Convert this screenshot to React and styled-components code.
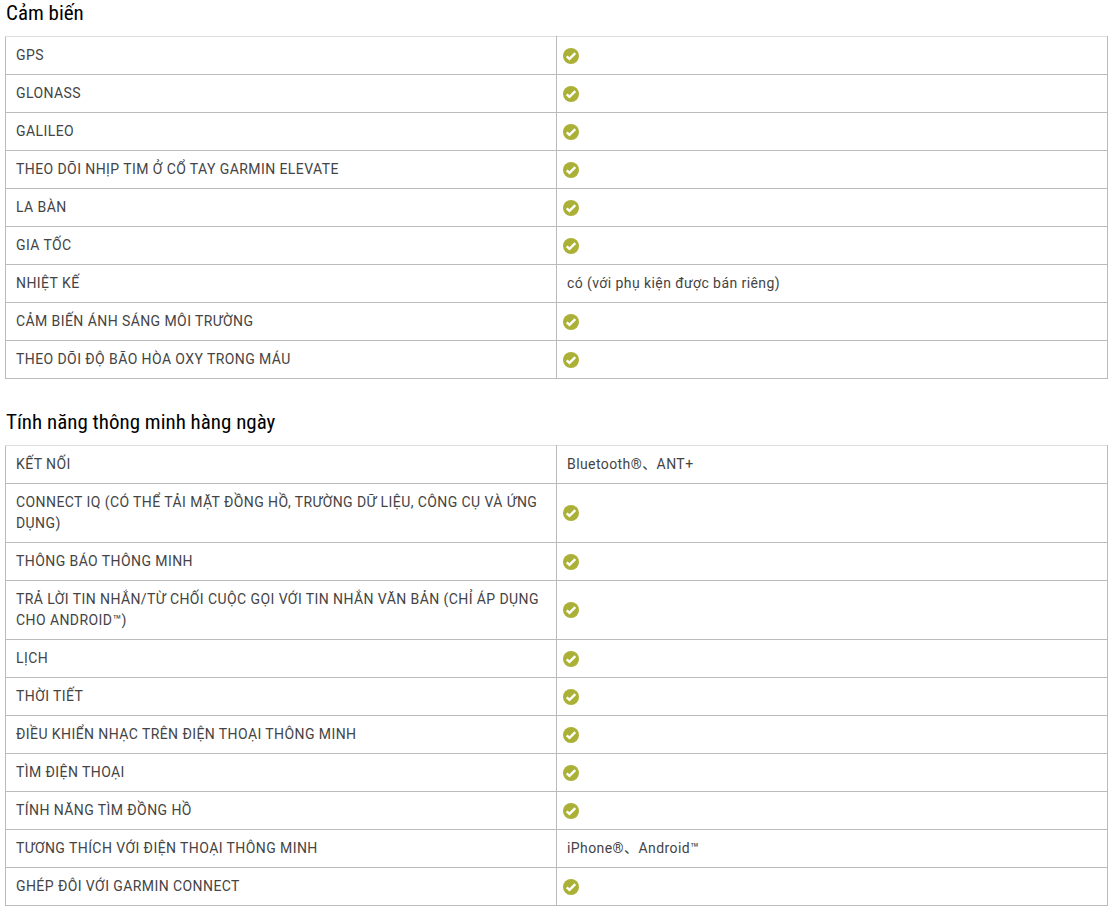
import React from "react";
import styled, { createGlobalStyle } from "styled-components";

const GlobalStyle = createGlobalStyle`
  body {
    margin: 0;
    background: #fff;
    color: #444;
    font-family: Roboto, "Noto Sans CJK SC", sans-serif;
    font-size: 14px;
    line-height: 21px;
  }
`;

const Page = styled.main`
  display: flex;
  flex-direction: column;
  gap: 30px;
  padding: 0 4px 2px 5px;
`;

const Title = styled.h2`
  margin: 0 0 9px;
  padding: 0 1px;
  color: #000;
  font-family: "Roboto Condensed", "Liberation Sans Narrow", Roboto, sans-serif;
  font-size: 21px;
  font-weight: 400;
  line-height: 27px;
`;

const Table = styled.table`
  width: 100%;
  table-layout: fixed;
  border-collapse: collapse;
  letter-spacing: 0.03em;

  th,
  td {
    box-sizing: border-box;
    border: 1px solid #bbb;
  }

  tr:first-child > * {
    border-top-color: #ddd;
  }
`;

const Label = styled.th`
  width: 50%;
  padding: 8px 10px;
  font-weight: 400;
  text-align: left;
  text-transform: uppercase;
`;

const Value = styled.td`
  width: 50%;
  padding: ${(props) => (props.$icon ? "8px 6px" : "8px 10px")};
`;

const CheckIcon = styled.svg`
  display: block;
  width: 16px;
  height: 16px;
`;

const sections = [
  {
    title: "Cảm biến",
    rows: [
      ["GPS", true],
      ["GLONASS", true],
      ["Galileo", true],
      ["Theo dõi nhịp tim ở cổ tay Garmin Elevate", true],
      ["La bàn", true],
      ["Gia tốc", true],
      ["Nhiệt kế", "có (với phụ kiện được bán riêng)"],
      ["Cảm biến ánh sáng môi trường", true],
      ["Theo dõi độ bão hòa oxy trong máu", true],
    ],
  },
  {
    title: "Tính năng thông minh hàng ngày",
    rows: [
      ["Kết nối", "Bluetooth®、ANT+"],
      ["Connect IQ (có thể tải mặt đồng hồ, trường dữ liệu, công cụ và ứng dụng)", true],
      ["Thông báo thông minh", true],
      ["Trả lời tin nhắn/từ chối cuộc gọi với tin nhắn văn bản (chỉ áp dụng cho Android™)", true],
      ["Lịch", true],
      ["Thời tiết", true],
      ["Điều khiển nhạc trên điện thoại thông minh", true],
      ["Tìm điện thoại", true],
      ["Tính năng tìm đồng hồ", true],
      ["Tương thích với điện thoại thông minh", "iPhone®、Android™"],
      ["Ghép đôi với Garmin Connect", true],
    ],
  },
];

const Check = () => (
  <CheckIcon viewBox="0 0 16 16" role="img" aria-label="Có">
    <circle cx="8" cy="8" r="8" fill="#abb136" />
    <path d="M3.7 8.3 6.5 10.9 12.3 5.2" fill="none" stroke="#fff" strokeWidth="2.4" />
  </CheckIcon>
);

const SpecSection = ({ title, rows }) => (
  <section>
    <Title>{title}</Title>
    <Table aria-label={title}>
      <tbody>
        {rows.map(([label, value]) => (
          <tr key={label}>
            <Label scope="row">{label}</Label>
            <Value $icon={value === true}>{value === true ? <Check /> : value}</Value>
          </tr>
        ))}
      </tbody>
    </Table>
  </section>
);

const App = () => (
  <>
    <GlobalStyle />
    <Page>
      {sections.map((section) => (
        <SpecSection key={section.title} {...section} />
      ))}
    </Page>
  </>
);

export default App;
